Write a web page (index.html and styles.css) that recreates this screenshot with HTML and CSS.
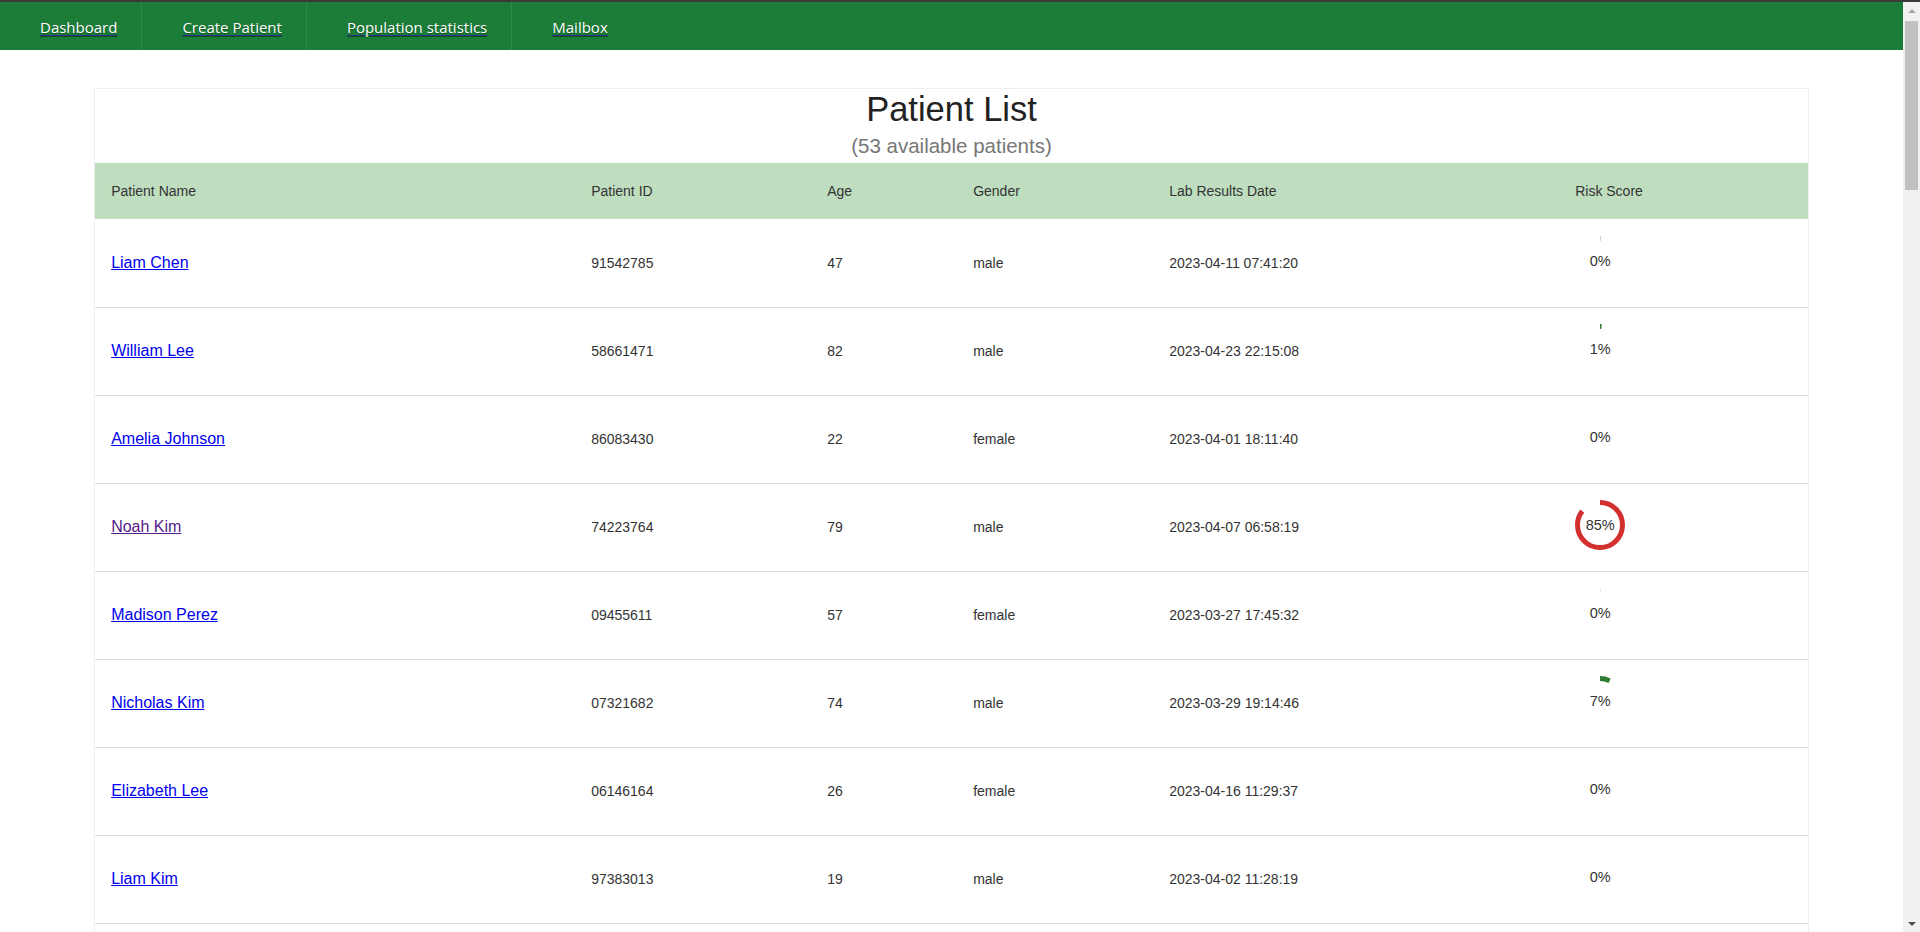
FILE: index.html
```html
<!DOCTYPE html>
<html lang="en">
<head>
<meta charset="utf-8">
<title>Patient List</title>
<link rel="stylesheet" href="styles.css">
</head>
<body>
<div class="viewport">
<div class="content">
<nav class="topnav">
  <ul class="navlist">
    <li class="navitem"><a href="#">Dashboard</a></li>
    <li class="navitem"><a href="#">Create Patient</a></li>
    <li class="navitem"><a href="#">Population statistics</a></li>
    <li class="navitem last"><a href="#">Mailbox</a></li>
  </ul>
</nav>
<main class="page">
  <section class="card">
    <h1 class="title">Patient List</h1>
    <p class="subtitle">(53 available patients)</p>
    <table class="patients">
      <colgroup>
        <col class="c-name"><col class="c-id"><col class="c-age"><col class="c-gender"><col class="c-date"><col class="c-risk">
      </colgroup>
      <thead>
        <tr><th>Patient Name</th><th>Patient ID</th><th>Age</th><th>Gender</th><th>Lab Results Date</th><th>Risk Score</th></tr>
      </thead>
      <tbody>
        <tr><td><a href="#">Liam Chen</a></td><td>91542785</td><td>47</td><td>male</td><td>2023-04-11 07:41:20</td><td><div class="risk"><svg class="donut" viewBox="0 0 50 50"><circle class="arc faint" cx="25" cy="25" r="22.5" stroke-dasharray="0.6 200" transform="rotate(-90 25 25)"/></svg><span class="pct">0%</span></div></td></tr>
        <tr><td><a href="#">William Lee</a></td><td>58661471</td><td>82</td><td>male</td><td>2023-04-23 22:15:08</td><td><div class="risk"><svg class="donut" viewBox="0 0 50 50"><circle class="arc low" cx="25" cy="25" r="22.5" stroke-dasharray="1.6 200" transform="rotate(-90 25 25)"/></svg><span class="pct">1%</span></div></td></tr>
        <tr><td><a href="#">Amelia Johnson</a></td><td>86083430</td><td>22</td><td>female</td><td>2023-04-01 18:11:40</td><td><div class="risk"><span class="pct">0%</span></div></td></tr>
        <tr><td><a href="#" class="visited">Noah Kim</a></td><td>74223764</td><td>79</td><td>male</td><td>2023-04-07 06:58:19</td><td><div class="risk"><svg class="donut" viewBox="0 0 50 50"><circle class="arc high" cx="25" cy="25" r="22.5" stroke-dasharray="120.2 200" transform="rotate(-90 25 25)"/></svg><span class="pct">85%</span></div></td></tr>
        <tr><td><a href="#">Madison Perez</a></td><td>09455611</td><td>57</td><td>female</td><td>2023-03-27 17:45:32</td><td><div class="risk"><svg class="donut" viewBox="0 0 50 50"><circle class="arc fainter" cx="25" cy="25" r="22.5" stroke-dasharray="0.5 200" transform="rotate(-90 25 25)"/></svg><span class="pct">0%</span></div></td></tr>
        <tr><td><a href="#">Nicholas Kim</a></td><td>07321682</td><td>74</td><td>male</td><td>2023-03-29 19:14:46</td><td><div class="risk"><svg class="donut" viewBox="0 0 50 50"><circle class="arc low" cx="25" cy="25" r="22.5" stroke-dasharray="9.9 200" transform="rotate(-90 25 25)"/></svg><span class="pct">7%</span></div></td></tr>
        <tr><td><a href="#">Elizabeth Lee</a></td><td>06146164</td><td>26</td><td>female</td><td>2023-04-16 11:29:37</td><td><div class="risk"><span class="pct">0%</span></div></td></tr>
        <tr><td><a href="#">Liam Kim</a></td><td>97383013</td><td>19</td><td>male</td><td>2023-04-02 11:28:19</td><td><div class="risk"><span class="pct">0%</span></div></td></tr>
        <tr><td><a href="#">Olivia Garcia</a></td><td>41820937</td><td>63</td><td>female</td><td>2023-04-05 09:12:44</td><td><div class="risk"><span class="pct">0%</span></div></td></tr>
        <tr><td><a href="#">Ethan Nguyen</a></td><td>30571846</td><td>35</td><td>male</td><td>2023-03-31 14:02:18</td><td><div class="risk"><span class="pct">0%</span></div></td></tr>
        <tr><td><a href="#">Sophia Martinez</a></td><td>62914058</td><td>71</td><td>female</td><td>2023-04-19 16:47:05</td><td><div class="risk"><span class="pct">0%</span></div></td></tr>
        <tr><td><a href="#">James Brown</a></td><td>15309472</td><td>58</td><td>male</td><td>2023-04-09 08:33:51</td><td><div class="risk"><span class="pct">0%</span></div></td></tr>
      </tbody>
    </table>
  </section>
</main>
</div>
<div class="scrollbar" aria-hidden="true">
  <div class="sb-btn"><span class="arrow-up"></span></div>
  <div class="sb-track"><div class="sb-thumb"></div></div>
  <div class="sb-btn"><span class="arrow-down"></span></div>
</div>
</div>
</body>
</html>
```

FILE: styles.css
```css
html, body { height: 100%; }
body {
  margin: 0;
  background: #fff;
  border-top: 2px solid #3a3a3a;
  box-sizing: border-box;
  font-family: "Liberation Sans", Arial, Helvetica, sans-serif;
  font-size: 14px;
  color: #333;
  overflow: hidden;
}

.viewport {
  height: 100%;
  display: flex;
}
.content {
  flex: 1;
  min-width: 0;
  height: 100%;
  overflow: hidden;
}

/* classic scrollbar */
.scrollbar {
  width: 17px;
  flex: none;
  background: #f1f1f1;
  display: flex;
  flex-direction: column;
}
.sb-btn {
  height: 17px;
  display: flex;
  align-items: center;
  justify-content: center;
}
.arrow-up {
  width: 0; height: 0;
  border-left: 4px solid transparent;
  border-right: 4px solid transparent;
  border-bottom: 4px solid #a3a3a3;
}
.arrow-down {
  width: 0; height: 0;
  border-left: 4px solid transparent;
  border-right: 4px solid transparent;
  border-top: 4px solid #505050;
}
.sb-track {
  flex: 1;
  padding: 2px 2px 0;
}
.sb-thumb {
  height: 169px;
  background: #c1c1c1;
}

/* top navigation */
.topnav {
  background: #1b7d38;
  height: 48px;
}
.navlist {
  list-style: none;
  margin: 0;
  padding: 0;
  display: flex;
  height: 100%;
}
.navitem {
  padding: 1px 24px 0 40px;
  border-right: 1px solid #2f8b49;
  display: flex;
  align-items: center;
}
.navitem.last { border-right: none; }
.navitem a {
  font-family: "Open Sans", "Noto Sans", sans-serif;
  font-size: 15px;
  color: #fff;
  text-decoration: underline;
  text-decoration-color: #2b2f86;
  text-underline-offset: 2px;
  text-shadow: 0 1px 1px rgba(0, 0, 0, 0.35);
}

/* page / card */
.page {
  padding: 38px 0 60px;
}
.card {
  width: 90%;
  margin: 0 auto;
  background: #fff;
  border: 1px solid #eeeeee;
}
.title {
  margin: 1px 0 0;
  font-size: 34.5px;
  font-weight: normal;
  line-height: 39px;
  color: #222;
  text-align: center;
}
.subtitle {
  margin: 5px 0 6px;
  font-size: 20.5px;
  line-height: 23px;
  color: #777;
  text-align: center;
}

/* table */
.patients {
  width: 100%;
  border-collapse: collapse;
  table-layout: fixed;
}
.c-name { width: 480px; }
.c-id { width: 236px; }
.c-age { width: 146px; }
.c-gender { width: 196px; }
.c-date { width: 406px; }
.patients th {
  background: #bfdec0;
  font-weight: normal;
  text-align: left;
  color: #333;
  padding: 18px 16px;
  line-height: 20px;
}
.patients td {
  height: 88px;
  box-sizing: border-box;
  padding: 0 16px;
  border-top: 1px solid #dddddd;
  vertical-align: middle;
  line-height: 20px;
}
.patients tbody tr:first-child td { border-top: none; }
.patients a { color: #0000ee; font-size: 16px; }
.patients a.visited { color: #551a8b; }

/* risk donut */
.risk {
  width: 50px;
  height: 50px;
  display: grid;
  place-items: center;
  margin-top: -4px;
}
.risk > * { grid-area: 1 / 1; }
.donut { width: 50px; height: 50px; }
.arc { fill: none; stroke-width: 5; }
.arc.high { stroke: #d32f2f; }
.arc.low { stroke: #2e7d32; }
.arc.faint { stroke: #8fc58f; }
.arc.fainter { stroke: #c3e0c3; }
.pct { font-size: 14.5px; color: #333; }
```
